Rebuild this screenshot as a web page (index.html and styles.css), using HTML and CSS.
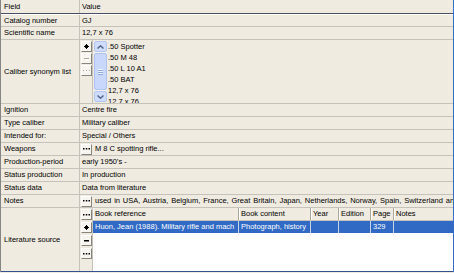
FILE: index.html
```
<!DOCTYPE html>
<html>
<head>
<meta charset="utf-8">
<link rel="stylesheet" href="styles.css">
</head>
<body>
<div class="grid">
  <div class="head">
    <div class="label">Field</div>
    <div class="value">Value</div>
  </div>
  <div class="row first">
    <div class="label">Catalog number</div>
    <div class="value">GJ</div>
  </div>
  <div class="row">
    <div class="label">Scientific name</div>
    <div class="value">12,7 x 76</div>
  </div>
  <div class="row tall">
    <div class="label">Caliber synonym list</div>
    <div class="value box">
      <div class="btncol">
        <div class="btn"><svg width="5" height="5" viewBox="0 0 5 5"><rect x="2" y="0" width="1" height="5" fill="#000"/><rect x="0" y="2" width="5" height="1" fill="#000"/><rect x="1" y="1" width="3" height="3" fill="#000"/></svg></div>
        <div class="btn off"><svg width="5" height="2" viewBox="0 0 5 2"><rect x="0" y="0" width="5" height="1" fill="#aca899"/><rect x="1" y="1" width="5" height="1" fill="#fff"/></svg></div>
        <div class="btn off"><svg width="7" height="2" viewBox="0 0 7 2"><rect x="0" y="0" width="1" height="1" fill="#aca899"/><rect x="3" y="0" width="1" height="1" fill="#aca899"/><rect x="6" y="0" width="1" height="1" fill="#aca899"/></svg></div>
      </div>
      <div class="sb">
        <div class="sb-btn"><svg width="7" height="4" viewBox="0 0 7 4"><polyline points="0.5,3.5 3.5,0.8 6.5,3.5" fill="none" stroke="#4d6185" stroke-width="1.4"/></svg></div>
        <div class="sb-thumb"><span class="grip"></span><span class="grip"></span><span class="grip"></span></div>
        <div class="sb-btn"><svg width="7" height="4" viewBox="0 0 7 4"><polyline points="0.5,0.5 3.5,3.2 6.5,0.5" fill="none" stroke="#4d6185" stroke-width="1.4"/></svg></div>
      </div>
      <div class="list">
        <div class="item">.50 Spotter</div>
        <div class="item">.50 M 48</div>
        <div class="item">.50 L 10 A1</div>
        <div class="item">.50 BAT</div>
        <div class="item">12,7 x 76</div>
        <div class="item">12,7 x 76</div>
      </div>
    </div>
  </div>
  <div class="row">
    <div class="label">Ignition</div>
    <div class="value">Centre fire</div>
  </div>
  <div class="row">
    <div class="label">Type caliber</div>
    <div class="value">Military caliber</div>
  </div>
  <div class="row">
    <div class="label">Intended for:</div>
    <div class="value">Special / Others</div>
  </div>
  <div class="row">
    <div class="label">Weapons</div>
    <div class="value withbtn">
      <div class="btn"><svg width="7" height="2" viewBox="0 0 7 2"><rect x="0" y="0" width="1.5" height="1.5" fill="#000"/><rect x="2.8" y="0" width="1.5" height="1.5" fill="#000"/><rect x="5.5" y="0" width="1.5" height="1.5" fill="#000"/></svg></div>
      <span class="txt">M 8 C spotting rifle...</span>
    </div>
  </div>
  <div class="row">
    <div class="label">Production-period</div>
    <div class="value">early 1950's -</div>
  </div>
  <div class="row">
    <div class="label">Status production</div>
    <div class="value">In production</div>
  </div>
  <div class="row">
    <div class="label">Status data</div>
    <div class="value">Data from literature</div>
  </div>
  <div class="row">
    <div class="label">Notes</div>
    <div class="value withbtn">
      <div class="btn"><svg width="7" height="2" viewBox="0 0 7 2"><rect x="0" y="0" width="1.5" height="1.5" fill="#000"/><rect x="2.8" y="0" width="1.5" height="1.5" fill="#000"/><rect x="5.5" y="0" width="1.5" height="1.5" fill="#000"/></svg></div>
      <span class="txt notes">used in USA, Austria, Belgium, France, Great Britain, Japan, Netherlands, Norway, Spain, Switzerland and others</span>
    </div>
  </div>
  <div class="row tall last">
    <div class="label">Literature source</div>
    <div class="value box">
      <div class="btncol lit">
        <div class="btn"><svg width="7" height="2" viewBox="0 0 7 2"><rect x="0" y="0" width="1.5" height="1.5" fill="#000"/><rect x="2.8" y="0" width="1.5" height="1.5" fill="#000"/><rect x="5.5" y="0" width="1.5" height="1.5" fill="#000"/></svg></div>
        <div class="btn"><svg width="5" height="5" viewBox="0 0 5 5"><rect x="2" y="0" width="1" height="5" fill="#000"/><rect x="0" y="2" width="5" height="1" fill="#000"/><rect x="1" y="1" width="3" height="3" fill="#000"/></svg></div>
        <div class="btn"><svg width="5" height="2" viewBox="0 0 5 2"><rect x="0" y="0" width="5" height="1.5" fill="#000"/></svg></div>
        <div class="btn"><svg width="7" height="2" viewBox="0 0 7 2"><rect x="0" y="0" width="1.5" height="1.5" fill="#000"/><rect x="2.8" y="0" width="1.5" height="1.5" fill="#000"/><rect x="5.5" y="0" width="1.5" height="1.5" fill="#000"/></svg></div>
      </div>
      <div class="table">
        <div class="thead">
          <div class="c c1">Book reference</div>
          <div class="c c2">Book content</div>
          <div class="c c3">Year</div>
          <div class="c c4">Edition</div>
          <div class="c c5">Page</div>
          <div class="c c6">Notes</div>
        </div>
        <div class="tr sel">
          <div class="c c1">Huon, Jean (1988). Military rifle and mach</div>
          <div class="c c2">Photograph, history</div>
          <div class="c c3"></div>
          <div class="c c4"></div>
          <div class="c c5">329</div>
          <div class="c c6"></div>
        </div>
      </div>
    </div>
  </div>
</div>
</body>
</html>
```

FILE: styles.css
```
* { box-sizing: border-box; }
html, body {
  margin: 0;
  padding: 0;
  background: #efebe0;
}
body {
  width: 454px;
  height: 273px;
  overflow: hidden;
  font-family: "Liberation Sans", Arial, sans-serif;
  font-size: 7.5px;
  color: #000;
}
.grid {
  width: 454px;
  border-left: 1px solid #858585;
  border-right: 1px solid #3b6cc4;
  background: #efebe0;
}
.head, .row {
  display: flex;
  height: 13px;
  border-bottom: 1px solid #c4c2ba;
  line-height: 12px;
}
.head {
  height: 14px;
  border-bottom: 1px solid #4b5068;
  line-height: 13px;
}
.row.first {
  height: 13px;
  border-top: 1px solid #ffffff;
  line-height: 11px;
}
.row.tall {
  height: 64px;
}
.row.last {
  border-bottom: 1px solid #34508f;
}
.label {
  width: 79px;
  flex: none;
  padding-left: 3px;
  border-right: 1px solid #c4c2ba;
  white-space: nowrap;
  overflow: hidden;
  display: flex;
  align-items: center;
}
.value {
  flex: 1;
  min-width: 0;
  padding-left: 2px;
  white-space: nowrap;
  overflow: hidden;
}
.value.withbtn {
  display: flex;
  align-items: center;
  padding-left: 1px;
}
.txt {
  margin-left: 3px;
  white-space: nowrap;
}
.txt.notes {
  word-spacing: 0.8px;
}
.btn {
  width: 11px;
  height: 11px;
  flex: none;
  background: #f6f5f0;
  border: 1px solid;
  border-color: #ffffff #85837a #85837a #ffffff;
  display: flex;
  align-items: center;
  justify-content: center;
}
.btn svg { display: block; }
.value.box {
  display: flex;
  padding-left: 0;
}
.btncol {
  width: 13px;
  flex: none;
  padding: 1px 0 0 1px;
  border-right: 1px solid #c4c2ba;
  display: flex;
  flex-direction: column;
  gap: 1px;
}
.btncol.lit {
  gap: 2px;
}
.sb {
  width: 13px;
  flex: none;
  margin: 1px 0 1px 1px;
  display: flex;
  flex-direction: column;
  background: #f3f2ec;
}
.sb-btn {
  height: 11px;
  flex: none;
  background: #cfdcfb;
  border: 1px solid #b3c6ef;
  border-radius: 2px;
  display: flex;
  align-items: center;
  justify-content: center;
}
.sb-btn svg { display: block; }
.sb-thumb {
  flex: 1;
  margin: 1px 0;
  background: #c8d7fb;
  border: 1px solid #aec3ef;
  border-radius: 2px;
  display: flex;
  flex-direction: column;
  align-items: center;
  justify-content: center;
  gap: 1px;
}
.grip {
  display: block;
  width: 5px;
  height: 1px;
  background: #eef3ff;
  box-shadow: 0 1px 0 #8fa8dc;
}
.list {
  flex: 1;
  min-width: 0;
  padding: 1px 0 0 1px;
  overflow: hidden;
}
.item {
  height: 11px;
  line-height: 11px;
  white-space: nowrap;
}
.table {
  flex: 1;
  min-width: 0;
  background: #ffffff;
  display: flex;
  flex-direction: column;
}
.thead, .tr {
  display: flex;
  height: 13px;
  line-height: 12px;
}
.thead {
  background: #efebe0;
  border-bottom: 1px solid #c4c2ba;
}
.tr {
  height: 12px;
  line-height: 12px;
}
.c {
  flex: none;
  padding-left: 2px;
  white-space: nowrap;
  overflow: hidden;
  border-right: 1px solid #aca899;
}
.thead .c {
  box-shadow: inset 1px 0 0 #ffffff;
}
.c1 { width: 146px; }
.c2 { width: 72px; }
.c3 { width: 28px; }
.c4 { width: 32px; }
.c5 { width: 23px; }
.c6 { flex: 1; border-right: 0; }
.tr.sel {
  background: #316ac5;
  color: #ffffff;
}
.tr.sel .c {
  border-right-color: #c9d3e6;
}
.tr.sel .c6 { border-right: 0; }
```
